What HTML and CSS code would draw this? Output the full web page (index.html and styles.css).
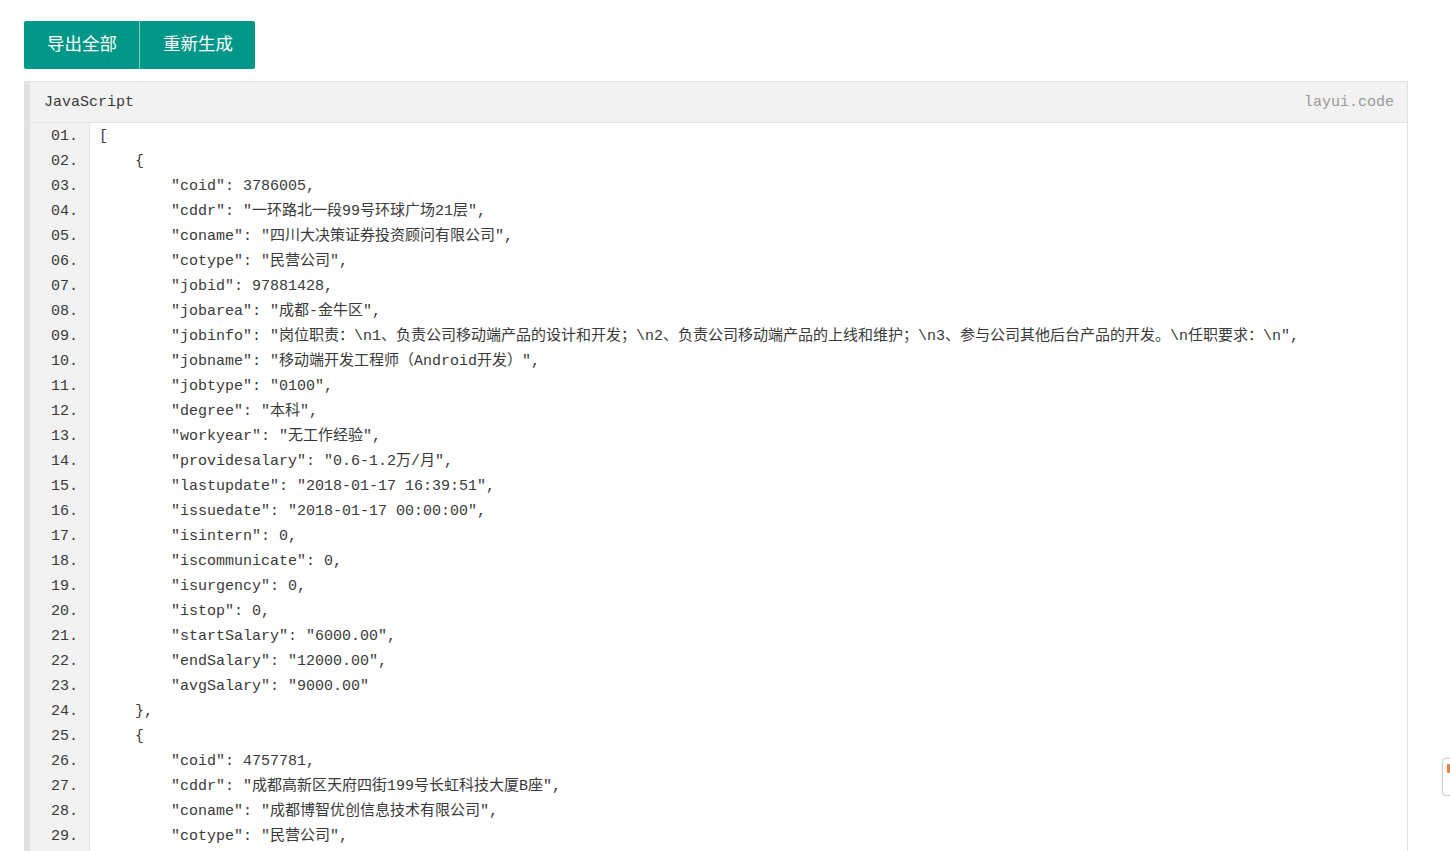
FILE: index.html
```html
<!DOCTYPE html>
<html lang="zh-CN">
<head>
    <link rel="stylesheet" href="styles.css">
    <meta charset="UTF-8">
    <meta name="viewport" content="width=device-width, initial-scale=1.0">
    <title>职位数据导出</title>
</head>
<body>
    <div class="page">
        <div class="btn-group">
            <button class="btn">导出全部</button>
            <button class="btn">重新生成</button>
        </div>
        <div class="code-view">
            <h3 class="code-head">JavaScript<a class="code-about" href="#">layui.code</a></h3>
            <ol class="code-lines">
<li>[</li>
<li>    {</li>
<li>        "coid": 3786005,</li>
<li>        "cddr": "一环路北一段99号环球广场21层",</li>
<li>        "coname": "四川大决策证券投资顾问有限公司",</li>
<li>        "cotype": "民营公司",</li>
<li>        "jobid": 97881428,</li>
<li>        "jobarea": "成都-金牛区",</li>
<li>        "jobinfo": "岗位职责：\n1、负责公司移动端产品的设计和开发；\n2、负责公司移动端产品的上线和维护；\n3、参与公司其他后台产品的开发。\n任职要求：\n",</li>
<li>        "jobname": "移动端开发工程师（Android开发）",</li>
<li>        "jobtype": "0100",</li>
<li>        "degree": "本科",</li>
<li>        "workyear": "无工作经验",</li>
<li>        "providesalary": "0.6-1.2万/月",</li>
<li>        "lastupdate": "2018-01-17 16:39:51",</li>
<li>        "issuedate": "2018-01-17 00:00:00",</li>
<li>        "isintern": 0,</li>
<li>        "iscommunicate": 0,</li>
<li>        "isurgency": 0,</li>
<li>        "istop": 0,</li>
<li>        "startSalary": "6000.00",</li>
<li>        "endSalary": "12000.00",</li>
<li>        "avgSalary": "9000.00"</li>
<li>    },</li>
<li>    {</li>
<li>        "coid": 4757781,</li>
<li>        "cddr": "成都高新区天府四街199号长虹科技大厦B座",</li>
<li>        "coname": "成都博智优创信息技术有限公司",</li>
<li>        "cotype": "民营公司",</li>
            </ol>
        </div>
    </div>
    <div class="side-tab"><span class="side-mark"></span></div>
</body>
</html>
```

FILE: styles.css
```css
body {
    margin: 0;
    padding: 0;
    background: #fff;
    font-family: "Noto Sans CJK SC", "Noto Sans", sans-serif;
}
.page {
    padding: 21px 42px 0 24px;
}
.btn-group {
    display: flex;
}
.btn {
    height: 48px;
    padding: 0 22px 4px 23px;
    border: none;
    background-color: #009688;
    color: #fff;
    font-family: "Noto Sans CJK SC", sans-serif;
    font-size: 17.5px;
    line-height: 44px;
    cursor: pointer;
}
.btn:first-child {
    border-radius: 2px 0 0 2px;
}
.btn + .btn {
    border-left: 1px solid rgba(255, 255, 255, .5);
    border-radius: 0 2px 2px 0;
}
.code-view {
    margin-top: 12px;
    border: 1px solid #e2e2e2;
    border-left-width: 6px;
    background-color: #f2f2f2;
    color: #3a3a3a;
    font-family: "Liberation Mono", "Noto Sans CJK SC", monospace;
    font-size: 15px;
}
.code-head {
    display: flex;
    justify-content: space-between;
    margin: 0;
    height: 40px;
    line-height: 42px;
    padding: 0 13px 0 14px;
    border-bottom: 1px solid #e2e2e2;
    font-size: 15px;
    font-weight: normal;
}
.code-about {
    color: #999;
    text-decoration: none;
}
.code-lines {
    list-style: none;
    margin: 0;
    padding: 1px 0 25px;
    counter-reset: ln;
    background: linear-gradient(to right, #f2f2f2 59px, #e2e2e2 59px, #e2e2e2 60px, #fff 60px);
}
.code-lines li {
    display: flex;
    counter-increment: ln;
    line-height: 25px;
    white-space: pre;
    background-color: #fff;
}
.code-lines li::before {
    content: counter(ln, decimal-leading-zero) ".";
    flex: 0 0 60px;
    box-sizing: border-box;
    padding-right: 11px;
    margin-right: 9px;
    text-align: right;
    background-color: #f2f2f2;
    border-right: 1px solid #e2e2e2;
}
.side-tab {
    position: fixed;
    top: 758px;
    right: -14px;
    width: 20px;
    height: 36px;
    border: 1px solid #c5d0da;
    border-radius: 4px;
    background: #fff;
    box-shadow: 0 0 2px rgba(0, 0, 0, .15);
}
.side-mark {
    position: absolute;
    top: 5px;
    left: 4px;
    width: 3px;
    height: 9px;
    background: #f07c3a;
    border-radius: 1px;
}
```
